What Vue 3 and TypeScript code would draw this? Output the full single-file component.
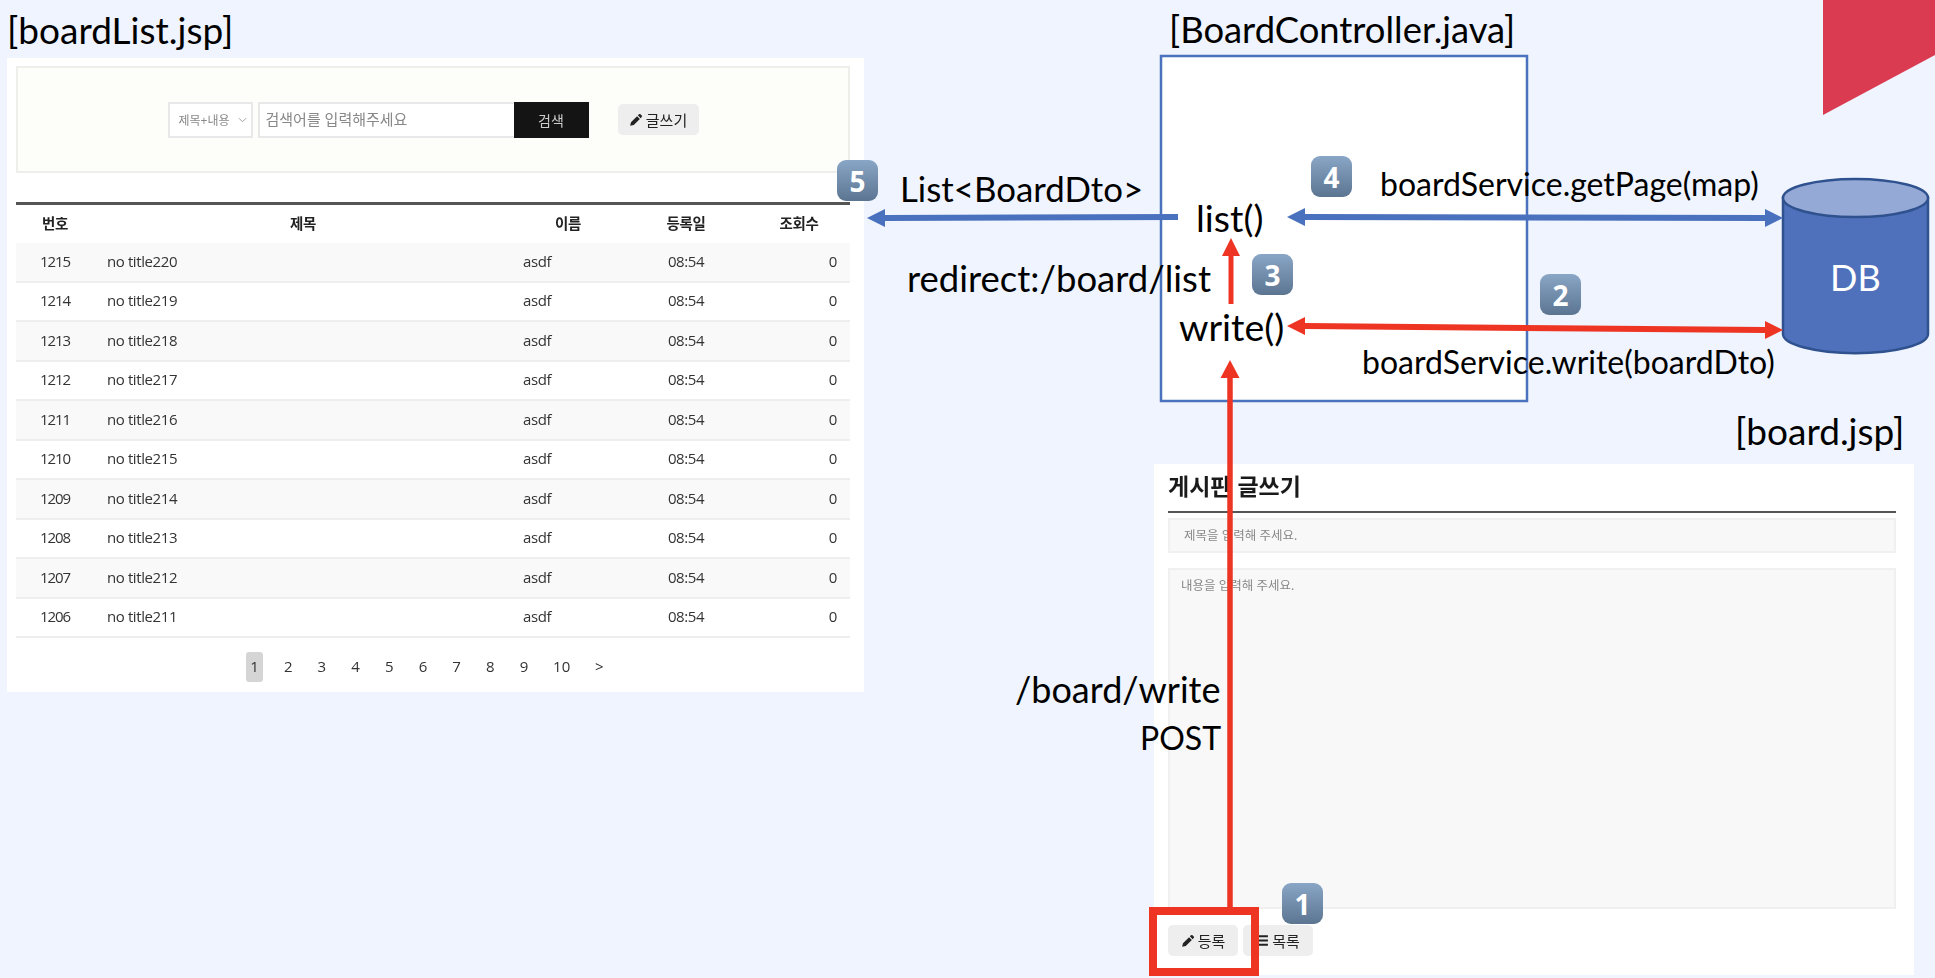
<script setup lang="ts">
interface Row { no: number; title: string }
const rows: Row[] = [1215, 1214, 1213, 1212, 1211, 1210, 1209, 1208, 1207, 1206].map((no, i) => ({
  no,
  title: `no title${220 - i}`,
}))
const pages = ['1', '2', '3', '4', '5', '6', '7', '8', '9', '10', '>']
const badges = [
  { n: '1', x: 1282, y: 883 },
  { n: '2', x: 1540, y: 274 },
  { n: '3', x: 1252, y: 254 },
  { n: '4', x: 1311, y: 156 },
  { n: '5', x: 837, y: 160 },
]
const pencil = 'M1 11 L1.7 7.9 L6.9 2.7 L9.3 5.1 L4.1 10.3 Z M7.6 2 L8.5 1.1 a1 1 0 0 1 1.4 0 L10.9 2.1 a1 1 0 0 1 0 1.4 L10 4.4 Z'
</script>

<template>
  <div class="slide">
    <section class="list-panel">
      <div class="search-box">
        <div class="select"><span>제목+내용</span>
          <svg class="chev" viewBox="0 0 10 6"><path d="M1 1 L5 5 L9 1" fill="none" stroke="#999" stroke-width="1" /></svg>
        </div>
        <div class="search-input">검색어를 입력해주세요</div>
        <div class="search-btn">검색</div>
        <div class="btn write-btn">
          <svg class="pencil" viewBox="0 0 12 12"><path :d="pencil" fill="#222" /></svg>글쓰기
        </div>
      </div>
      <div class="table">
        <div class="tr head">
          <span>번호</span><span>제목</span><span>이름</span><span>등록일</span><span>조회수</span>
        </div>
        <div v-for="r in rows" :key="r.no" class="tr body">
          <span class="t-no">{{ r.no }}</span>
          <span class="t-title">{{ r.title }}</span>
          <span class="t-name">asdf</span>
          <span>08:54</span>
          <span class="t-count">0</span>
        </div>
      </div>
      <div class="pager">
        <span v-for="(p, i) in pages" :key="p" class="page" :class="{ active: i === 0, wide: p === '10' }">{{ p }}</span>
      </div>
    </section>

    <section class="write-panel">
      <h2 class="write-title">게시판 글쓰기</h2>
      <div class="field field-title">제목을 입력해 주세요.</div>
      <div class="field field-body">내용을 입력해 주세요.</div>
      <div class="actions">
        <div class="btn action">
          <svg class="pencil" viewBox="0 0 12 12"><path :d="pencil" fill="#222" /></svg>등록
        </div>
        <div class="btn action">
          <svg class="bars" viewBox="0 0 12 10"><path d="M1 1 H11 M1 5 H11 M1 9 H11" stroke="#222" stroke-width="1.8" /></svg>목록
        </div>
      </div>
    </section>

    <svg class="diagram" viewBox="0 0 1935 978">
      <polygon points="1823,0 1935,0 1935,55 1823,115" fill="#da3b50" />
      <rect x="1161" y="56" width="366" height="345" fill="#fff" stroke="#4a72bd" stroke-width="2.5" />

      <path d="M1783 198 V334 A72 19 0 0 0 1928 334 V198 Z" fill="#4f71bc" stroke="#2f528f" stroke-width="2.5" />
      <ellipse cx="1855.5" cy="198" rx="72.5" ry="19" fill="#95a9d7" stroke="#2f528f" stroke-width="2.5" />

      <path d="M1178 217 L885 218" stroke="#4a71bd" stroke-width="6" />
      <polygon points="867,218 885,209 885,227" fill="#4a71bd" />
      <path d="M1305 217 L1765 218" stroke="#4a71bd" stroke-width="6" />
      <polygon points="1287,217 1305,208 1305,226" fill="#4a71bd" />
      <polygon points="1783,218 1765,209 1765,227" fill="#4a71bd" />

      <path d="M1305 326 L1765 330" stroke="#ee3524" stroke-width="6" />
      <polygon points="1287,326 1305,317 1305,335" fill="#ee3524" />
      <polygon points="1783,330 1765,321 1765,339" fill="#ee3524" />

      <path d="M1231 304 V256" stroke="#ee3524" stroke-width="5" />
      <polygon points="1231,238 1240,256 1222,256" fill="#ee3524" />
      <path d="M1230 910 V378" stroke="#ee3524" stroke-width="5.5" />
      <polygon points="1230,360 1239.5,378 1220.5,378" fill="#ee3524" />

      <rect x="1153" y="911" width="102" height="61" fill="none" stroke="#ee3524" stroke-width="8" />
    </svg>

    <span class="label l-boardlist">[boardList.jsp]</span>
    <span class="label l-controller">[BoardController.java]</span>
    <span class="label l-dto">List&lt;BoardDto&gt;</span>
    <span class="label l-list">list()</span>
    <span class="label l-page">boardService.getPage(map)</span>
    <span class="label l-redirect">redirect:/board/list</span>
    <span class="label l-write">write()</span>
    <span class="label l-swrite">boardService.write(boardDto)</span>
    <span class="label l-board">[board.jsp]</span>
    <span class="label l-bwrite">/board/write</span>
    <span class="label l-post">POST</span>
    <span class="label l-db">DB</span>

    <span v-for="b in badges" :key="b.n" class="badge" :style="{ left: b.x + 'px', top: b.y + 'px' }">{{ b.n }}</span>
  </div>
</template>

<style>
html, body { margin: 0; padding: 0; }
</style>

<style scoped>
.slide {
  position: relative;
  width: 1935px;
  height: 978px;
  overflow: hidden;
  background: #eff4fe;
  font-family: "Open Sans", "Noto Sans CJK KR", sans-serif;
}
.list-panel {
  position: absolute;
  left: 7px;
  top: 58px;
  width: 857px;
  height: 634px;
  box-sizing: border-box;
  padding: 8px 14px 0 9px;
  background: #fff;
  color: #333;
  font-size: 15px;
  filter: blur(0.4px);
}
.search-box {
  display: flex;
  align-items: center;
  justify-content: center;
  height: 107px;
  box-sizing: border-box;
  border: 2px solid #eeeeea;
  background: #fdfef9;
  margin-bottom: 29px;
}
.select {
  display: flex;
  align-items: center;
  justify-content: space-between;
  width: 85px;
  height: 36px;
  box-sizing: border-box;
  padding: 0 4px 0 9px;
  background: #fff;
  border: 2px solid #e8e8e8;
  color: #888;
  font-size: 12px;
  margin-right: 5px;
}
.chev { width: 9px; height: 6px; }
.search-input {
  display: flex;
  align-items: center;
  width: 256px;
  height: 36px;
  box-sizing: border-box;
  padding: 0 6px 2px;
  background: #fff;
  border: 2px solid #e8e8e8;
  border-right: 0;
  color: #888;
  font-size: 15px;
}
.search-btn {
  display: flex;
  align-items: center;
  justify-content: center;
  width: 75px;
  height: 36px;
  background: #141414;
  color: #ccc;
  font-size: 14px;
  margin-right: 29px;
}
.btn {
  display: flex;
  align-items: center;
  justify-content: center;
  gap: 3px;
  height: 31px;
  border-radius: 5px;
  background: #eeeeee;
  color: #222;
  font-size: 15px;
}
.write-btn { width: 81px; }
.pencil { width: 14px; height: 14px; }
.bars { width: 13px; height: 11px; }
.table { border-top: 3px solid #555; letter-spacing: -0.4px; }
.tr {
  display: grid;
  grid-template-columns: 78px 418px 112px 124px 102px;
  align-items: center;
  text-align: center;
}
.head {
  height: 38px;
  box-sizing: border-box;
  padding-bottom: 4px;
  font-weight: 700;
  color: #222;
  font-size: 14.5px;
}
.body {
  height: 39.5px;
  box-sizing: border-box;
  padding-bottom: 2px;
  border-bottom: 2px solid #eeeeee;
}
.body:nth-child(even) { background: #f9f9f9; }
.t-no { letter-spacing: -1.1px; }
.t-title { text-align: left; padding-left: 13px; }
.t-name { text-align: left; padding-left: 11px; }
.t-count { text-align: right; padding-right: 13px; }
.pager {
  display: flex;
  gap: 16.7px;
  margin-top: 14px;
  padding-left: 230px;
}
.page {
  display: flex;
  align-items: center;
  justify-content: center;
  width: 17px;
  height: 30px;
  box-sizing: border-box;
  padding-bottom: 3px;
  border-radius: 3px;
  font-size: 15px;
  color: #333;
}
.page.wide { width: 25px; }
.page.active { background: #d5d5d5; }
.write-panel {
  position: absolute;
  left: 1154px;
  top: 464px;
  width: 760px;
  height: 511px;
  box-sizing: border-box;
  padding: 0 18px 0 14px;
  background: #fff;
  display: flex;
  flex-direction: column;
  filter: blur(0.4px);
}
.write-title {
  margin: 0 0 5px;
  height: 49px;
  box-sizing: border-box;
  padding-top: 7px;
  line-height: 30px;
  border-bottom: 2px solid #555;
  font-size: 23px;
  font-weight: 700;
  color: #1a1a1a;
  flex: none;
}
.field {
  box-sizing: border-box;
  background: #f8f8f8;
  border: 2px solid #f0f0f0;
  color: #888;
  font-size: 12.5px;
  flex: none;
}
.field-title {
  height: 35px;
  line-height: 31px;
  padding-left: 14px;
  margin-bottom: 15px;
}
.field-body {
  height: 341px;
  padding: 6px 0 0 11px;
  line-height: 20px;
  margin-bottom: 16px;
}
.actions { display: flex; gap: 5px; }
.action { width: 70px; }
.diagram {
  position: absolute;
  left: 0;
  top: 0;
  width: 1935px;
  height: 978px;
}
.label {
  position: absolute;
  color: #000;
  font-family: Lato, "Noto Sans", sans-serif;
  white-space: nowrap;
  line-height: 1;
}
.l-boardlist { left: 7px; top: 11px; font-size: 37px; }
.l-controller { left: 1169px; top: 11px; font-size: 36.4px; }
.l-dto { left: 900px; top: 172px; font-size: 34.8px; }
.l-list { left: 1196px; top: 199px; font-size: 37.4px; }
.l-page { left: 1380px; top: 168px; font-size: 32px; }
.l-redirect { left: 907px; top: 260px; font-size: 36.5px; }
.l-write { left: 1179px; top: 308px; font-size: 37.5px; }
.l-swrite { left: 1362px; top: 346px; font-size: 32px; }
.l-board { left: 1735px; top: 412px; font-size: 37px; }
.l-bwrite { left: 1015px; top: 671px; font-size: 36px; }
.l-post { left: 1140px; top: 722px; font-size: 32px; }
.l-db { left: 1830px; top: 259px; font-size: 36px; color: #fff; }
.badge {
  position: absolute;
  display: flex;
  align-items: center;
  justify-content: center;
  width: 41px;
  height: 41px;
  border-radius: 9px;
  background: linear-gradient(#8aa6c6, #5b7591);
  color: #fff;
  font: 700 28px "Open Sans", sans-serif;
}
</style>
